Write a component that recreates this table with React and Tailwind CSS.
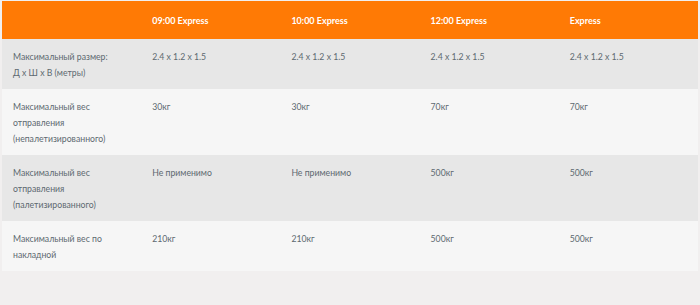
const columns = ["", "09:00 Express", "10:00 Express", "12:00 Express", "Express"];

const rows = [
  {
    label: ["Максимальный размер:", "Д x Ш x В (метры)"],
    values: ["2.4 x 1.2 x 1.5", "2.4 x 1.2 x 1.5", "2.4 x 1.2 x 1.5", "2.4 x 1.2 x 1.5"],
  },
  {
    label: ["Максимальный вес", "отправления", "(непалетизированного)"],
    values: ["30кг", "30кг", "70кг", "70кг"],
  },
  {
    label: ["Максимальный вес", "отправления", "(палетизированного)"],
    values: ["Не применимо", "Не применимо", "500кг", "500кг"],
  },
  {
    label: ["Максимальный вес по", "накладной"],
    values: ["210кг", "210кг", "500кг", "500кг"],
  },
];

function App() {
  return (
    <div className="min-h-[305px] bg-[#f1efef] px-[2px] pt-px font-['Lato','Liberation_Sans',sans-serif]">
      <table className="w-full table-fixed border-collapse">
        <thead>
          <tr className="bg-[#ff7a05] h-[38px]">
            {columns.map((col, i) => (
              <th
                key={i}
                className="px-[11px] pt-px text-left align-middle text-[9px] font-bold text-white"
              >
                {col}
              </th>
            ))}
          </tr>
        </thead>
        <tbody>
          {rows.map((row, r) => (
            <tr key={r} className={r % 2 === 0 ? "bg-[#e7e7e7]" : "bg-[#f6f6f6]"}>
              <td className="pl-[11px] pr-2 pt-[10px] pb-[8px] align-top text-[8.7px] leading-4 text-[#5d6970]">
                {row.label.map((line, i) => (
                  <div key={i}>{line}</div>
                ))}
              </td>
              {row.values.map((v, i) => (
                <td
                  key={i}
                  className="px-[11px] pt-[10px] pb-[8px] align-top text-[8.7px] leading-4 text-[#5d6970]"
                >
                  {v}
                </td>
              ))}
            </tr>
          ))}
        </tbody>
      </table>
    </div>
  );
}

export default App;
